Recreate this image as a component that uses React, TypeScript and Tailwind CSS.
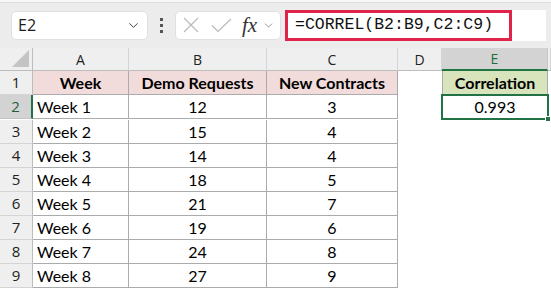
import { ChevronDown } from "lucide-react";

const rows = [
  ["Week 1", "12", "3"],
  ["Week 2", "15", "4"],
  ["Week 3", "14", "4"],
  ["Week 4", "18", "5"],
  ["Week 5", "21", "7"],
  ["Week 6", "19", "6"],
  ["Week 7", "24", "8"],
  ["Week 8", "27", "9"],
];

const cols = ["A", "B", "C", "D", "E", ""];

const cellFont = { fontFamily: "Lato, 'Open Sans', sans-serif" };
const uiFont = { fontFamily: "'Open Sans', 'Noto Sans', sans-serif" };

export default function App() {
  return (
    <div className="w-[551px] h-[289px] overflow-hidden bg-white text-black">
      {/* Toolbar */}
      <div className="h-[48px] bg-[#ececec] flex flex-col">
        <div className="h-[3px] bg-[#f7f7f7] border-b border-[#dedede]" />
        <div className="flex items-center h-[34px] mt-[5px] pl-[11px]">
          <div
            className="w-[137px] h-[29px] bg-white rounded-[5px] border border-[#e0e0e0] flex items-center justify-between pl-[6px] pr-[6px]"
            style={uiFont}
          >
            <span className="text-[16px] text-[#1b1b1b]">E2</span>
            <ChevronDown size={15} strokeWidth={1.6} className="text-[#444]" />
          </div>
          <div className="w-[27px] flex flex-col items-center gap-[3px]">
            <span className="w-[3px] h-[3px] bg-[#555]" />
            <span className="w-[3px] h-[3px] bg-[#555]" />
            <span className="w-[3px] h-[3px] bg-[#555]" />
          </div>
          <div className="w-[106px] h-[29px] bg-white rounded-[5px] border border-[#e0e0e0] flex items-center pl-[7px]">
            <svg width="16" height="16" viewBox="0 0 16 16" className="text-[#bababa]">
              <path d="M1 1L15 15M15 1L1 15" stroke="currentColor" strokeWidth="1.2" fill="none" />
            </svg>
            <svg width="21" height="15" viewBox="0 0 21 15" className="text-[#bababa] ml-[12px]">
              <path d="M1 7.5L7 13.5L20 1" stroke="currentColor" strokeWidth="1.2" fill="none" />
            </svg>
            <span
              className="italic text-[21px] text-[#333] ml-[10px] leading-none"
              style={{ fontFamily: "'Liberation Serif', 'DejaVu Serif', serif" }}
            >
              fx
            </span>
            <ChevronDown size={13} strokeWidth={1.6} className="text-[#888] ml-[5px]" />
          </div>
          <div className="ml-[4px] w-[261px] h-[31px] bg-white flex items-center">
            <div className="w-[227px] h-[31px] border-[3px] border-[#e0234b] flex items-center pl-[7px]">
              <span
                className="text-[16.5px] text-[#111]"
                style={{ fontFamily: "'Liberation Mono', 'DejaVu Sans Mono', monospace" }}
              >
                =CORREL(B2:B9,C2:C9)
              </span>
            </div>
          </div>
        </div>
      </div>

      {/* Grid */}
      <div className="grid grid-cols-[33px_96px_138px_131px_44px_106px_1fr]">
        {/* column header row */}
        <div className="h-[23px] bg-[#efefef] border-r border-b border-[#bdbdbd] relative">
          <div className="absolute right-[3px] bottom-[3px] w-0 h-0 border-l-[17px] border-l-transparent border-b-[17px] border-b-[#c4c4c4]" />
        </div>
        {cols.map((c, i) => (
          <div
            key={i}
            className={
              c === "E"
                ? "h-[23px] bg-[#d3d3d3] border-r border-[#c8c8c8] border-b-2 border-b-[#217346] flex items-center justify-center text-[14px] text-[#1f6b40]"
                : "h-[23px] bg-[#efefef] border-r border-[#d4d4d4] border-b border-b-[#bdbdbd] flex items-center justify-center text-[14px] text-[#222]"
            }
            style={uiFont}
          >
            {c}
          </div>
        ))}

        {/* row 1 */}
        <div
          className="h-[24px] bg-[#efefef] border-r border-[#bdbdbd] border-b border-b-[#d4d4d4] flex items-center justify-center text-[15px] text-[#222]"
          style={uiFont}
        >
          1
        </div>
        {["Week", "Demo Requests", "New Contracts"].map((h) => (
          <div
            key={h}
            className="h-[24px] bg-[#f2dcdb] border-r border-b border-[#ababab] flex items-center justify-center font-bold text-[16px]"
            style={cellFont}
          >
            {h}
          </div>
        ))}
        <div className="h-[24px]" />
        <div
          className="h-[24px] bg-[#d8e4bc] border-l border-r border-[#ababab] flex items-center justify-center font-bold text-[16px]"
          style={cellFont}
        >
          Correlation
        </div>
        <div className="h-[24px]" />

        {rows.map((r, i) => {
          const n = i + 2;
          const sel = n === 2;
          return [
            <div
              key={`h${n}`}
              className={
                sel
                  ? "h-[24px] bg-[#d3d3d3] border-r-2 border-[#217346] border-b border-b-[#c4c4c4] flex items-center justify-center text-[15px] text-[#1f5f3c]"
                  : "h-[24px] bg-[#efefef] border-r border-[#bdbdbd] border-b border-b-[#d4d4d4] flex items-center justify-center text-[15px] text-[#222]"
              }
              style={uiFont}
            >
              {n}
            </div>,
            <div
              key={`a${n}`}
              className="h-[24px] border-r border-b border-[#ababab] flex items-center pl-[4px] text-[16px]"
              style={cellFont}
            >
              {r[0]}
            </div>,
            <div
              key={`b${n}`}
              className="h-[24px] border-r border-b border-[#ababab] flex items-center justify-center text-[16px]"
              style={cellFont}
            >
              {r[1]}
            </div>,
            <div
              key={`c${n}`}
              className="h-[24px] border-r border-b border-[#ababab] flex items-center justify-center text-[16px]"
              style={cellFont}
            >
              {r[2]}
            </div>,
            <div key={`d${n}`} className="h-[24px]" />,
            sel ? (
              <div
                key={`e${n}`}
                className="relative border-2 border-[#217346] -ml-[1px] -mt-[1px] h-[26px] w-[108px] flex items-center justify-center text-[16px]"
                style={cellFont}
              >
                0.993
                <div className="absolute -right-[4px] -bottom-[4px] w-[6px] h-[6px] bg-[#217346] border border-white" />
              </div>
            ) : (
              <div key={`e${n}`} className="h-[24px]" />
            ),
            <div key={`f${n}`} className="h-[24px]" />,
          ];
        })}
      </div>
    </div>
  );
}
